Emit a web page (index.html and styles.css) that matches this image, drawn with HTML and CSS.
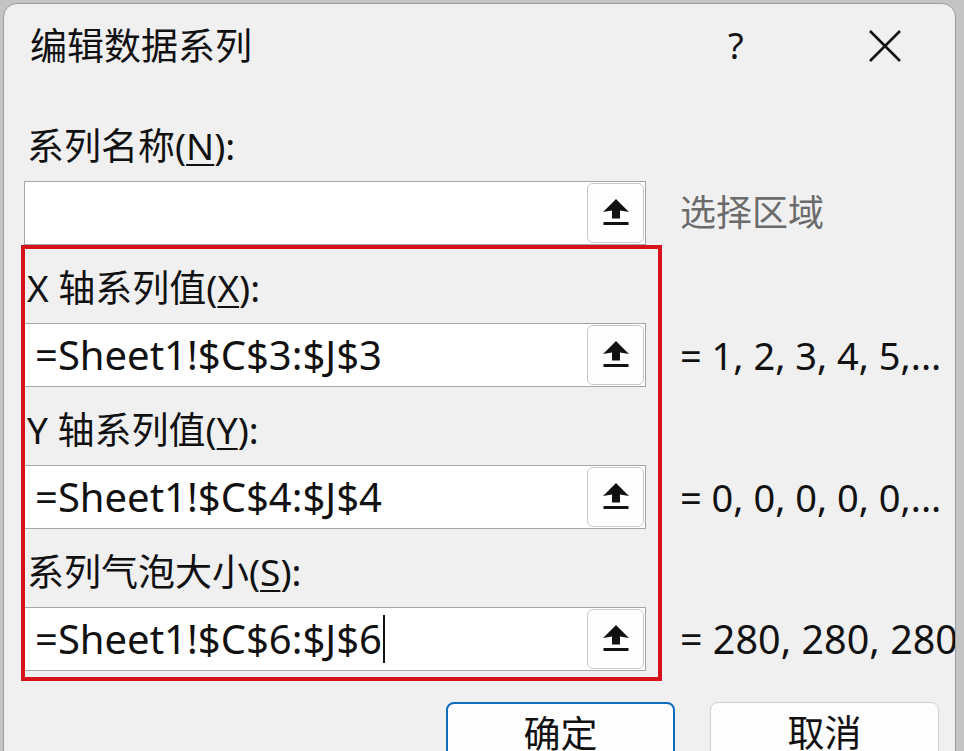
FILE: index.html
```html
<!DOCTYPE html>
<html lang="zh-CN">
<head>
<meta charset="utf-8">
<title>编辑数据系列</title>
<link rel="stylesheet" href="styles.css">
</head>
<body>
<div class="dialog">
  <div class="titlebar">
    <div class="title">编辑数据系列</div>
    <div class="help">?</div>
    <div class="close">
      <svg width="32" height="32" viewBox="0 0 32 32"><path d="M1 1 L31 31 M31 1 L1 31" stroke="#111" stroke-width="2.6" fill="none"/></svg>
    </div>
  </div>

  <div class="form">
    <div class="field-label first">系列名称(<u>N</u>):</div>
    <div class="field-row">
      <div class="input"><span class="formula"></span>
        <div class="pick"><svg width="26" height="26" viewBox="0 0 26 26"><path d="M13 0 L0 13 L9 11.5 L9 19.5 L17 19.5 L17 11.5 L26 13 Z" fill="#111"/><rect x="0.5" y="23" width="25" height="3" fill="#111"/></svg></div>
      </div>
      <div class="value hint">选择区域</div>
    </div>

    <div class="field-label">X 轴系列值(<u>X</u>):</div>
    <div class="field-row">
      <div class="input"><span class="formula">=Sheet1!$C$3:$J$3</span>
        <div class="pick"><svg width="26" height="26" viewBox="0 0 26 26"><path d="M13 0 L0 13 L9 11.5 L9 19.5 L17 19.5 L17 11.5 L26 13 Z" fill="#111"/><rect x="0.5" y="23" width="25" height="3" fill="#111"/></svg></div>
      </div>
      <div class="value">= 1, 2, 3, 4, 5,...</div>
    </div>

    <div class="field-label">Y 轴系列值(<u>Y</u>):</div>
    <div class="field-row">
      <div class="input"><span class="formula">=Sheet1!$C$4:$J$4</span>
        <div class="pick"><svg width="26" height="26" viewBox="0 0 26 26"><path d="M13 0 L0 13 L9 11.5 L9 19.5 L17 19.5 L17 11.5 L26 13 Z" fill="#111"/><rect x="0.5" y="23" width="25" height="3" fill="#111"/></svg></div>
      </div>
      <div class="value">= 0, 0, 0, 0, 0,...</div>
    </div>

    <div class="field-label">系列气泡大小(<u>S</u>):</div>
    <div class="field-row">
      <div class="input"><span class="formula">=Sheet1!$C$6:$J$6</span><span class="caret"></span>
        <div class="pick"><svg width="26" height="26" viewBox="0 0 26 26"><path d="M13 0 L0 13 L9 11.5 L9 19.5 L17 19.5 L17 11.5 L26 13 Z" fill="#111"/><rect x="0.5" y="23" width="25" height="3" fill="#111"/></svg></div>
      </div>
      <div class="value wide">= 280, 280, 280</div>
    </div>

    <div class="buttons">
      <div class="btn primary">确定</div>
      <div class="btn">取消</div>
    </div>
  </div>

  <div class="highlight"></div>
</div>
</body>
</html>
```

FILE: styles.css
```css
html, body {
  margin: 0;
  padding: 0;
  width: 964px;
  height: 751px;
  overflow: hidden;
  background: #c4c4c4;
}

body {
  font-family: "Noto Sans", "Noto Sans CJK SC", sans-serif;
  color: #111;
}

.dialog {
  position: relative;
  margin: 3px 0 0 3px;
  width: 953px;
  height: 800px;
  box-sizing: border-box;
  border: 1px solid #9c9c9c;
  border-radius: 14px 14px 0 0;
  background: #f0f0f1;
  overflow: hidden;
}

.titlebar {
  display: flex;
  align-items: center;
  height: 84px;
  padding-left: 26px;
}

.title {
  font-size: 37px;
  line-height: 40px;
  flex: 1;
}

.help {
  font-size: 36px;
  line-height: 40px;
  width: 20px;
  margin-right: 121px;
}

.close {
  width: 32px;
  height: 32px;
  margin-right: 54px;
}

.close svg {
  display: block;
}

.form {
  padding-left: 20px;
}

.field-label {
  font-size: 37px;
  height: 36px;
  line-height: 36px;
  margin-top: 25px;
  padding-left: 3px;
  white-space: nowrap;
}

.field-label.first {
  margin-top: 40px;
}

.field-label u {
  text-decoration-thickness: 2px;
  text-underline-offset: 4px;
}

.field-row {
  display: flex;
  align-items: center;
  margin-top: 17px;
  height: 64px;
}

.input {
  flex: 0 0 622px;
  width: 622px;
  height: 64px;
  box-sizing: border-box;
  border: 1px solid #a6a6a6;
  background: #fff;
  display: flex;
  align-items: center;
  padding: 0 1px 0 10px;
}

.formula {
  font-size: 40px;
  line-height: 46px;
  white-space: nowrap;
}

.caret {
  display: inline-block;
  width: 2px;
  height: 48px;
  background: #111;
  margin-left: 1px;
}

.pick {
  margin-left: auto;
  width: 57px;
  height: 60px;
  box-sizing: border-box;
  border: 1px solid #c9c9c9;
  border-radius: 6px;
  background: #fefefe;
  display: flex;
  align-items: center;
  justify-content: center;
}

.pick svg {
  display: block;
  margin-top: -3px;
}

.value {
  margin-left: 34px;
  font-size: 38px;
  line-height: 48px;
  white-space: nowrap;
}

.value.wide {
  font-size: 39.5px;
}

.value.hint {
  font-size: 36px;
  color: #6b6b6b;
}

.buttons {
  display: flex;
  justify-content: flex-end;
  gap: 35px;
  margin-top: 31px;
  padding-right: 16px;
}

.btn {
  width: 229px;
  height: 64px;
  box-sizing: border-box;
  border: 1px solid #cfcfcf;
  border-radius: 8px;
  background: #fdfdfd;
  font-size: 37px;
  line-height: 60px;
  text-align: center;
}

.btn.primary {
  border: 2px solid #0f6cbd;
}

.highlight {
  position: absolute;
  left: 17px;
  top: 241px;
  width: 641px;
  height: 436px;
  box-sizing: border-box;
  border: 4px solid #d7121d;
  pointer-events: none;
}
```
